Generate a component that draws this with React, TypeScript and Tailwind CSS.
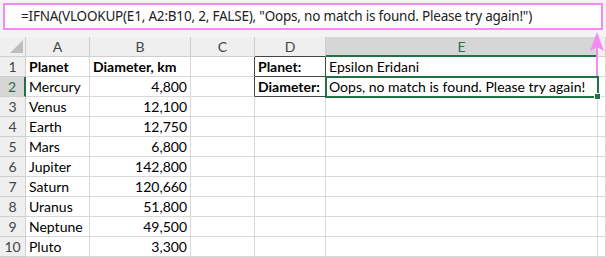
import React from "react"

type Row = { a: string; b: string; d?: string; e?: string }

const rows: Row[] = [
  { a: "Planet", b: "Diameter, km", d: "Planet:", e: "Epsilon Eridani" },
  { a: "Mercury", b: "4,800", d: "Diameter:", e: "Oops, no match is found. Please try again!" },
  { a: "Venus", b: "12,100" },
  { a: "Earth", b: "12,750" },
  { a: "Mars", b: "6,800" },
  { a: "Jupiter", b: "142,800" },
  { a: "Saturn", b: "120,660" },
  { a: "Uranus", b: "51,800" },
  { a: "Neptune", b: "49,500" },
  { a: "Pluto", b: "3,300" },
]

const cell = "h-[20px] border-r border-b border-[#d9d9d9] bg-white text-[14px] leading-[20px] text-black px-[3px] whitespace-nowrap overflow-visible"
const head = "h-[20px] border-r border-b border-[#cfcfcf] bg-[#efefef] text-[14px] leading-[19px] text-[#444] text-center"

function FormulaBar() {
  return (
    <div className="h-[37px] pt-[3px] px-[3px]">
      <div className="h-[27px] w-[600px] border-2 border-[#f38bf3] bg-white pl-[16px] font-['Noto_Sans',sans-serif] text-[13.5px] tracking-[-0.2px] leading-[22px] text-[#222] whitespace-nowrap">
        =IFNA(VLOOKUP(E1, A2:B10, 2, FALSE), "Oops, no match is found. Please try again!")
      </div>
    </div>
  )
}

function Sheet() {
  return (
    <div className="grid grid-cols-[26px_64px_101px_64px_71px_272px_1fr] font-['Lato',sans-serif]">
      {/* column headers */}
      <div className={`${head} relative`}>
        <div className="absolute right-[2px] bottom-[3px] w-0 h-0 border-l-[13px] border-l-transparent border-b-[13px] border-b-[#bdbdbd]" />
      </div>
      <div className={head}>A</div>
      <div className={head}>B</div>
      <div className={head}>C</div>
      <div className={`${head} border-b-[#444]`}>D</div>
      <div className="h-[20px] border-r border-[#cfcfcf] border-b-2 border-b-[#217346] bg-[#d6d6d6] text-[14px] leading-[19px] text-[#217346] text-center">E</div>
      <div className={head} />

      {rows.map((r, i) => {
        const n = i + 1
        const boxed = n <= 2
        return (
          <React.Fragment key={n}>
            {n === 2 ? (
              <div className="h-[20px] border-b border-[#cfcfcf] border-r-2 border-r-[#217346] bg-[#d6d6d6] text-[14px] leading-[19px] text-[#217346] text-center">
                {n}
              </div>
            ) : (
              <div className={head}>{n}</div>
            )}
            <div className={`${cell} ${n === 1 ? "bg-[#d9e1f2] font-bold" : ""}`}>{r.a}</div>
            <div className={`${cell} ${n === 1 ? "bg-[#d9e1f2] font-bold" : "text-right"}`}>{r.b}</div>
            <div className={`${cell} ${boxed ? "border-r-[#444]" : ""}`} />
            <div className={`${cell} ${boxed ? "border-r-[#444] border-b-[#444] font-bold" : ""}`}>{r.d}</div>
            <div className={`${cell} ${boxed ? "border-r-[#444] border-b-[#444]" : ""}`}>{r.e}</div>
            <div className={cell} />
          </React.Fragment>
        )
      })}
    </div>
  )
}

export default function App() {
  return (
    <div className="relative w-[606px] h-[257px] overflow-hidden bg-[#f3f3f3]">
      <FormulaBar />
      <Sheet />

      {/* active cell E2 */}
      <div className="absolute left-[325px] top-[76px] w-[274px] h-[22px] border-2 border-[#217346]" />
      <div className="absolute left-[594px] top-[93px] w-[7px] h-[7px] bg-[#217346] border border-white" />

      {/* pink arrow pointing to formula bar */}
      <svg className="absolute left-[589px] top-[31px]" width="16" height="48" viewBox="0 0 16 48">
        <line x1="8" y1="14" x2="8" y2="45" stroke="#f38bf3" strokeWidth="2" />
        <path d="M8 1 L15 20 L8 16 L1 20 Z" fill="#f38bf3" />
      </svg>
    </div>
  )
}
